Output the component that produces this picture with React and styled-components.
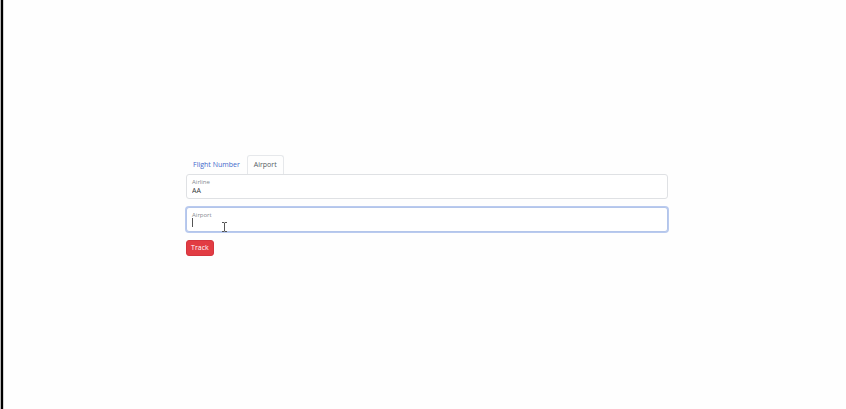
import React, { useState } from "react";
import styled, { createGlobalStyle, css } from "styled-components";

const GlobalStyle = createGlobalStyle`
  *, *::before, *::after { box-sizing: border-box; }
  body {
    margin: 0;
    background: #fefefe;
    color: #212529;
    font-family: "Open Sans", "Noto Sans", sans-serif;
  }
  button, input { font-family: inherit; }
`;

const Page = styled.main`
  display: flex;
  align-items: center;
  justify-content: center;
  min-height: 100vh;
  padding-left: 7px;
  border-left: 1px solid #b8b8b8;
  box-shadow: inset 2px 0 0 #000, inset 3px 0 0 #d4d4d4;
`;

const Tracker = styled.form`
  display: flex;
  flex-direction: column;
  align-items: flex-start;
  width: 57.5%;
  padding-top: 2px;
`;

const Tabs = styled.div`
  display: flex;
  height: 19px;
`;

const Tab = styled.button`
  padding: 0 6px;
  border: 1px solid transparent;
  border-bottom: 0;
  border-radius: 3px 3px 0 0;
  background: transparent;
  color: #3f68cb;
  font-size: 7px;
  line-height: 18px;
  white-space: nowrap;
  cursor: pointer;

  ${({ $active }) =>
    $active &&
    css`
      border-color: #e6e8eb;
      color: #555c63;
    `}
`;

const Field = styled.div`
  position: relative;
  width: 100%;
  margin-bottom: 8px;
`;

const FieldLabel = styled.label`
  position: absolute;
  top: 4px;
  left: 6px;
  color: #858a90;
  font-size: 6px;
  line-height: 8px;
`;

const FieldInput = styled.input`
  display: block;
  width: 100%;
  height: 25px;
  padding: 9px 5px 1px;
  border: 1px solid #dfe1e4;
  border-radius: 3px;
  outline: none;
  background: #fff;
  color: #33373b;
  font-size: 7px;
  line-height: 12px;
  caret-color: transparent;

  ${({ $highlighted }) =>
    $highlighted &&
    css`
      border-color: #b3c5ea;
      box-shadow: 0 0 0 1px #b9caef;
    `}
`;

const Caret = styled.span`
  position: absolute;
  top: 11px;
  left: 6px;
  width: 1px;
  height: 9px;
  background: #555;
`;

const Pointer = styled.svg`
  position: absolute;
  top: 15px;
  left: 35px;
  width: 7px;
  height: 10px;
  pointer-events: none;
`;

const TrackButton = styled.button`
  height: 16px;
  padding: 0 4px;
  border: 1px solid #d4353e;
  border-radius: 3px;
  background: #e23c43;
  color: #fff;
  font-size: 7px;
  line-height: 14px;
  cursor: pointer;
`;

export default function App() {
  const [airline, setAirline] = useState("AA");
  const [airport, setAirport] = useState("");

  return (
    <>
      <GlobalStyle />
      <Page>
        <Tracker onSubmit={(event) => event.preventDefault()}>
          <Tabs role="tablist">
            <Tab type="button" role="tab" aria-selected="false">Flight Number</Tab>
            <Tab type="button" role="tab" aria-selected="true" $active>Airport</Tab>
          </Tabs>
          <Field>
            <FieldInput id="airline" value={airline} onChange={(e) => setAirline(e.target.value)} />
            <FieldLabel htmlFor="airline">Airline</FieldLabel>
          </Field>
          <Field>
            <FieldInput id="airport" value={airport} onChange={(e) => setAirport(e.target.value)} $highlighted />
            <FieldLabel htmlFor="airport">Airport</FieldLabel>
            <Caret />
            <Pointer viewBox="0 0 7 10" fill="none" stroke="#555" aria-hidden="true">
              <path d="M1 .5h2l.5.5.5-.5h2M3.5 1v8M1 9.5h2l.5-.5.5.5h2" />
            </Pointer>
          </Field>
          <TrackButton type="submit">Track</TrackButton>
        </Tracker>
      </Page>
    </>
  );
}
